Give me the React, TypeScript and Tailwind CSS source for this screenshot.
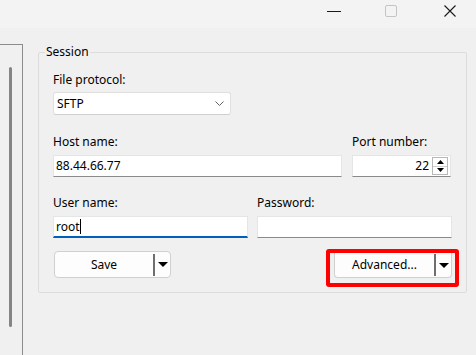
import React from "react";

function Caret() {
  return (
    <svg width="10" height="5" viewBox="0 0 10 5">
      <polygon points="0,0 10,0 5,5" fill="#000" />
    </svg>
  );
}

function SplitButton({ label, className = "" }: { label: string; className?: string }) {
  return (
    <div
      className={`flex items-center bg-[#fdfdfd] border border-[#d0d0d0] rounded-[4px] ${className}`}
    >
      <span className="flex-1 text-center leading-[16px]">{label}</span>
      <span className="w-[2px] h-[22px] bg-[#6e6e6e]" />
      <span className="w-[15px] flex justify-center">
        <Caret />
      </span>
    </div>
  );
}

function Field({ label, children, className = "" }: { label: string; children: React.ReactNode; className?: string }) {
  return (
    <div className={`flex flex-col ${className}`}>
      <span className="leading-[16px]">{label}</span>
      <div className="mt-[5px]">{children}</div>
    </div>
  );
}

function TextBox({ value, focused = false, className = "" }: { value?: string; focused?: boolean; className?: string }) {
  return (
    <div
      className={`h-[22px] bg-white border border-[#e5e5e5] flex items-center px-[2px] ${
        focused ? "border-b-2 border-b-[#005fb8]" : "border-b-[#8a8a8a]"
      } ${className}`}
    >
      <span className="leading-[16px]">{value}</span>
      {focused && <span className="w-px h-[15px] bg-black" />}
    </div>
  );
}

export default function App() {
  return (
    <div className="w-[476px] h-[355px] bg-[#f0f0f0] flex flex-col overflow-hidden font-['Noto_Sans',sans-serif] text-[12px] text-black">
      {/* title bar */}
      <div className="h-[28px] bg-[#f3f3f3] flex items-center justify-end pr-[20px] pb-[7px]">
        <svg width="14" height="2" viewBox="0 0 14 2" className="mt-[2px]">
          <rect width="14" height="1" fill="#1a1a1a" />
        </svg>
        <svg width="12" height="12" viewBox="0 0 12 12" className="ml-[44px]">
          <rect x="0.5" y="0.5" width="11" height="11" rx="1.5" fill="none" stroke="#c4c4c4" />
        </svg>
        <svg width="12" height="12" viewBox="0 0 12 12" className="ml-[47px]">
          <path d="M0.5 0.5 L11.5 11.5 M11.5 0.5 L0.5 11.5" stroke="#1a1a1a" strokeWidth="1.1" />
        </svg>
      </div>

      <div className="flex-1 flex pt-[16px]">
        {/* left panel */}
        <div className="w-[23px] border-t border-r border-[#8c8c8c]">
          <div className="ml-[9px] mt-[22px] w-[3px] h-[260px] bg-[#858585] rounded-full" />
        </div>

        <div className="pl-[15px]">
          <fieldset className="w-[428px] border border-[#dcdcdc] rounded-[2px] px-[14px] pb-[14px]">
            <legend className="-ml-2 px-[1px] leading-[16px]">Session</legend>

            <div className="mt-[12px] leading-[16px]">File protocol:</div>
            <div className="mt-[4px] w-[178px] h-[23px] bg-white border border-[#e0e0e0] border-b-[#cfcfcf] rounded-[3px] flex items-center justify-between pl-[3px] pr-[6px]">
              <span className="leading-[16px]">SFTP</span>
              <svg width="9" height="5" viewBox="0 0 9 5">
                <path d="M0.5 0.5 L4.5 4.5 L8.5 0.5" fill="none" stroke="#606060" strokeWidth="1" />
              </svg>
            </div>

            <div className="mt-[19px] flex gap-[10px]">
              <Field label="Host name:" className="w-[289px]">
                <TextBox value="88.44.66.77" />
              </Field>
              <Field label="Port number:" className="w-[99px]">
                <div className="h-[22px] bg-white border border-[#e5e5e5] border-b-[#8a8a8a] flex items-center justify-end pr-[2px]">
                  <span className="leading-[16px] mr-[3px]">22</span>
                  <div className="w-[16px] h-[18px] border border-[#b8b8b8] flex flex-col">
                    <div className="flex-1 flex items-center justify-center border-b border-[#d0d0d0]">
                      <svg width="7" height="4" viewBox="0 0 7 4">
                        <polygon points="0,4 7,4 3.5,0" fill="#000" />
                      </svg>
                    </div>
                    <div className="flex-1 flex items-center justify-center">
                      <svg width="7" height="4" viewBox="0 0 7 4">
                        <polygon points="0,0 7,0 3.5,4" fill="#000" />
                      </svg>
                    </div>
                  </div>
                </div>
              </Field>
            </div>

            <div className="mt-[18px] flex gap-[9px]">
              <Field label="User name:" className="w-[195px]">
                <TextBox value="root" focused />
              </Field>
              <Field label="Password:" className="w-[195px]">
                <TextBox />
              </Field>
            </div>

            <div className="mt-[13px] flex items-start justify-between">
              <SplitButton label="Save" className="ml-px w-[117px] h-[27px]" />
              <div className="-mt-[2px] -mb-[9px] -mr-[7px] border-4 border-[#ff0000] rounded-[3px] pl-[4px] pr-[3px] pb-[5px]">
                <SplitButton label="Advanced..." className="w-[118px] h-[25px] border-t-0 rounded-t-none" />
              </div>
            </div>
          </fieldset>
        </div>
      </div>
    </div>
  );
}
